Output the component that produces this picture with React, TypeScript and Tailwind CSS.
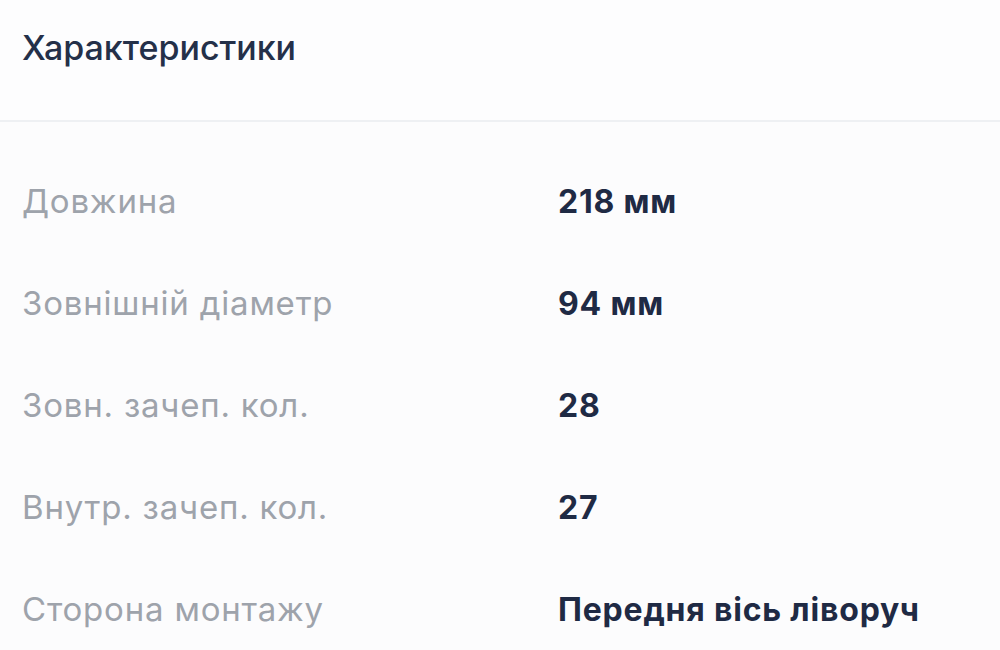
const specs = [
  { label: "Довжина", value: "218 мм" },
  { label: "Зовнішній діаметр", value: "94 мм" },
  { label: "Зовн. зачеп. кол.", value: "28" },
  { label: "Внутр. зачеп. кол.", value: "27" },
  { label: "Сторона монтажу", value: "Передня вісь ліворуч" },
];

const App = () => {
  return (
    <main className="w-[1000px] h-[650px] overflow-hidden bg-[#fcfcfd] font-['Inter',sans-serif]">
      <header className="h-[122px] px-[22px] pt-[28px] border-b-2 border-[#eef0f3] bg-[#fdfdfe]">
        <h2 className="text-[34px] leading-[40px] font-medium text-[#243049]">
          Характеристики
        </h2>
      </header>
      <section className="pt-[29px] px-[22px]">
        {specs.map((s) => (
          <div key={s.label} className="grid grid-cols-[536px_1fr] h-[102px] items-center">
            <span className="text-[33px] text-[#9ea3ab] tracking-[0.8px]">{s.label}</span>
            <span className="text-[32px] font-bold text-[#1f2a44] tracking-[0.8px]">{s.value}</span>
          </div>
        ))}
      </section>
    </main>
  );
};

export default App;
